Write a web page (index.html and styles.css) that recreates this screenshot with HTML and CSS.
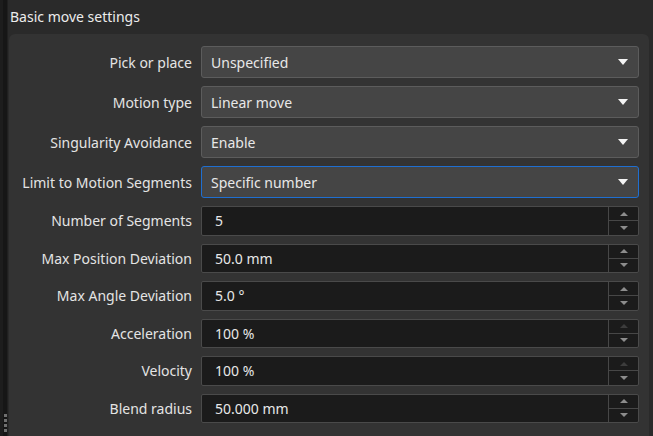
FILE: index.html
```html
<!DOCTYPE html>
<html>
<head>
<meta charset="utf-8">
<link rel="stylesheet" href="styles.css">
</head>
<body>
<div class="app">
  <div class="strip">
    <div class="grip">
      <span></span><span></span><span></span><span></span>
    </div>
  </div>
  <div class="main">
    <div class="header">Basic move settings</div>
    <div class="panel">
      <div class="form">
        <div class="label">Pick or place</div>
        <div class="combo"><span>Unspecified</span><i class="caret"></i></div>

        <div class="label">Motion type</div>
        <div class="combo"><span>Linear move</span><i class="caret"></i></div>

        <div class="label">Singularity Avoidance</div>
        <div class="combo"><span>Enable</span><i class="caret"></i></div>

        <div class="label">Limit to Motion Segments</div>
        <div class="combo focus"><span>Specific number</span><i class="caret"></i></div>

        <div class="label">Number of Segments</div>
        <div class="spin"><span class="val">5</span><div class="btns"><div class="btn"><i class="up"></i></div><div class="btn"><i class="down"></i></div></div></div>

        <div class="label">Max Position Deviation</div>
        <div class="spin"><span class="val">50.0 mm</span><div class="btns"><div class="btn"><i class="up"></i></div><div class="btn"><i class="down"></i></div></div></div>

        <div class="label">Max Angle Deviation</div>
        <div class="spin"><span class="val">5.0 °</span><div class="btns"><div class="btn"><i class="up"></i></div><div class="btn"><i class="down"></i></div></div></div>

        <div class="label">Acceleration</div>
        <div class="spin"><span class="val">100 %</span><div class="btns"><div class="btn"><i class="up off"></i></div><div class="btn"><i class="down"></i></div></div></div>

        <div class="label">Velocity</div>
        <div class="spin"><span class="val">100 %</span><div class="btns"><div class="btn"><i class="up off"></i></div><div class="btn"><i class="down"></i></div></div></div>

        <div class="label">Blend radius</div>
        <div class="spin"><span class="val">50.000 mm</span><div class="btns"><div class="btn"><i class="up"></i></div><div class="btn"><i class="down"></i></div></div></div>
      </div>
    </div>
  </div>
</div>
</body>
</html>
```
FILE: styles.css
```css
* { box-sizing: border-box; }
html, body {
  margin: 0;
  padding: 0;
  width: 653px;
  height: 436px;
  overflow: hidden;
  background: #2a2a2a;
  font-family: "Noto Sans", "Open Sans", sans-serif;
  font-size: 14px;
  color: #e4e4e4;
}
.app {
  display: flex;
  height: 436px;
}
.strip {
  width: 8px;
  flex: none;
  background: #161616;
  border-left: 3px solid #1d1d1d;
  border-right: 1px solid #202020;
  display: flex;
  flex-direction: column;
  justify-content: flex-end;
  padding-bottom: 4px;
}
.grip {
  display: flex;
  flex-direction: column;
  gap: 2px;
  padding-left: 1px;
}
.grip span {
  display: block;
  width: 3px;
  height: 3px;
  background: #6f6f6f;
}
.main {
  flex: 1;
  display: flex;
  flex-direction: column;
  padding-right: 4px;
}
.header {
  height: 34px;
  flex: none;
  padding-left: 2px;
  line-height: 34px;
  color: #ececec;
}
.panel {
  flex: 1;
  margin-left: 1px;
  background: #333333;
  border-radius: 6px 6px 0 0;
  padding: 12px 10px 0 0;
}
.form {
  display: grid;
  grid-template-columns: 183px 1fr;
  column-gap: 9px;
  row-gap: 8px;
  grid-auto-rows: auto;
}
.label {
  text-align: right;
  align-self: center;
  white-space: nowrap;
  color: #e4e4e4;
}
.combo {
  height: 32px;
  background: #454545;
  border: 1px solid #5c5c5c;
  border-radius: 3px;
  display: flex;
  align-items: center;
  justify-content: space-between;
  padding: 0 10px 0 9px;
  color: #e8e8e8;
}
.combo.focus {
  border-color: #1f6fd1;
}
.caret {
  width: 0;
  height: 0;
  border-left: 5px solid transparent;
  border-right: 5px solid transparent;
  border-top: 6px solid #f4f4f4;
  margin-right: 0;
}
.spin {
  height: 29.5px;
  background: #1b1b1b;
  border: 1px solid #4a4a4a;
  border-radius: 2px;
  display: flex;
  align-items: stretch;
  color: #e8e8e8;
}
.val {
  flex: 1;
  align-self: center;
  padding-left: 13px;
}
.btns {
  width: 30px;
  flex: none;
  border-left: 1px solid #474747;
  display: flex;
  flex-direction: column;
}
.btn {
  flex: 1;
  display: flex;
  align-items: center;
  justify-content: center;
}
.btn + .btn {
  border-top: 1px solid #474747;
}
.up {
  width: 0;
  height: 0;
  border-left: 4px solid transparent;
  border-right: 4px solid transparent;
  border-bottom: 4px solid #8c8c8c;
}
.up.off {
  border-bottom-color: #3c3c3c;
}
.down {
  width: 0;
  height: 0;
  border-left: 4px solid transparent;
  border-right: 4px solid transparent;
  border-top: 4px solid #8c8c8c;
}
```
